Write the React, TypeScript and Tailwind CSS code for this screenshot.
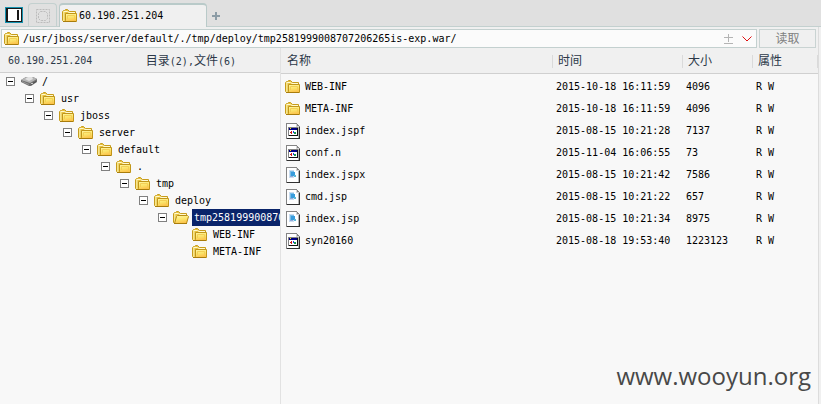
import React from "react";

const MONO = "font-['DejaVu_Sans_Mono','Noto_Sans_CJK_SC',monospace]";

function Folder({ open = false }: { open?: boolean }) {
  return (
    <svg width="16" height="14" viewBox="0 0 16 14" className="shrink-0" aria-hidden="true">
      <defs>
        <linearGradient id="folder-front" x1="0" y1="0" x2="0.3" y2="1">
          <stop offset="0" stopColor="#fff7a8" />
          <stop offset="0.55" stopColor="#fbe56c" />
          <stop offset="1" stopColor="#fcc44c" />
        </linearGradient>
        <linearGradient id="folder-back" x1="0" y1="0" x2="1" y2="0">
          <stop offset="0" stopColor="#fdf6b4" />
          <stop offset="0.25" stopColor="#e6bf3a" />
          <stop offset="1" stopColor="#f3dc70" />
        </linearGradient>
      </defs>
      <path d="M0.5 11.5V2.5L1.5 1.5H2.5L3.5 0.5H5.5L7.5 2.5H13.5V11.5L12.5 12.5H1.5Z" fill="url(#folder-back)" stroke="#c79c1c" />
      <path d="M2 2.5H5.5L7 3.5H13" fill="none" stroke="#fff9d0" />
      {open ? (
        <path d="M3.5 5.5L4.5 4.5H14.5L15.5 5.5L13.5 12.5H1.5Z" fill="url(#folder-front)" stroke="#b98e14" />
      ) : (
        <>
          <path d="M3.5 4.5H14.5V12.5H2.5L3.5 11.5Z" fill="url(#folder-front)" stroke="#c1961a" />
          <path d="M5.5 10V6.5H12.5V10" fill="none" stroke="#f3cf55" />
        </>
      )}
      <path d="M1 12.5H14" stroke="#a87c0c" />
    </svg>
  );
}

function Drive() {
  return (
    <svg width="16" height="10" viewBox="0 0 16 10" className="shrink-0" aria-hidden="true">
      <path d="M0 3L5 0H12L16 2V5L10 9H8L0 5Z" fill="#6f6f6f" />
      <path d="M0 3L5 0H12L16 2L9 6Z" fill="#b4b4b4" />
      <path d="M4 2L7 0H11L12 2L8 4Z" fill="#e2e2e2" />
      <path d="M1 4.5L8 7.5" stroke="#969696" />
      <path d="M10 7.5L15 4.5" stroke="#4c4c4c" />
      <path d="M10 6H12V7H10Z" fill="#c8c8c8" />
    </svg>
  );
}

function FileIcon({ kind }: { kind: "app" | "script" }) {
  return (
    <svg width="14" height="16" viewBox="0 0 14 16" className="mx-px shrink-0" shapeRendering="crispEdges" aria-hidden="true">
      <path d="M0 0H10L14 4V16H0Z" fill="#848484" />
      <path d="M13 4H14V16H1V15H13Z" fill="#303030" />
      <path d="M1 1H10V4H13V15H1Z" fill="#ffffff" />
      <path d="M10 1H11V3H13V4H10Z" fill="#d4d4d4" />
      <path d="M12 4H13V15H12Z" fill="#b8b8b8" />
      {kind === "app" ? (
        <>
          <path d="M2 4H12V13H2Z" fill="#848484" />
          <path d="M11 5H12V13H3V12H11Z" fill="#101010" />
          <path d="M3 7H11V12H3Z" fill="#ffffff" />
          <path d="M3 5H11V7H3Z" fill="#000084" />
          <path d="M4 5H5V6H4Z" fill="#ffe000" />
          <path d="M5 8H6V11H5V10H4V9H5Z" fill="#d01818" />
          <path d="M7 8H8V10H7Z" fill="#2040e0" />
          <path d="M8 9H10V11H8Z" fill="#189850" />
        </>
      ) : (
        <>
          <path d="M3 3H8V11H3Z" fill="#c8dcf0" />
          <path d="M4 4H8V9H4Z" fill="#78bce8" />
          <path d="M5 5H9V9H5Z" fill="#389cdc" />
          <path d="M4 9H7V10H4Z" fill="#90a8d8" />
          <path d="M8 8H10V10H8Z" fill="#58b8d8" />
        </>
      )}
    </svg>
  );
}

const tree = [
  { name: "/", indent: "pl-1" },
  { name: "usr", indent: "pl-[23px]" },
  { name: "jboss", indent: "pl-[42px]" },
  { name: "server", indent: "pl-[61px]" },
  { name: "default", indent: "pl-[80px]" },
  { name: ".", indent: "pl-[99px]" },
  { name: "tmp", indent: "pl-[118px]" },
  { name: "deploy", indent: "pl-[137px]" },
  { name: "tmp2581999008707206265is-exp.war", indent: "pl-[156px]", selected: true },
  { name: "WEB-INF", indent: "pl-[190px]", leaf: true },
  { name: "META-INF", indent: "pl-[190px]", leaf: true },
];

type Row = { name: string; time: string; size: string; kind: "folder" | "app" | "script" };

const files: Row[] = [
  { name: "WEB-INF", time: "2015-10-18 16:11:59", size: "4096", kind: "folder" },
  { name: "META-INF", time: "2015-10-18 16:11:59", size: "4096", kind: "folder" },
  { name: "index.jspf", time: "2015-08-15 10:21:28", size: "7137", kind: "app" },
  { name: "conf.n", time: "2015-11-04 16:06:55", size: "73", kind: "app" },
  { name: "index.jspx", time: "2015-08-15 10:21:42", size: "7586", kind: "script" },
  { name: "cmd.jsp", time: "2015-08-15 10:21:22", size: "657", kind: "script" },
  { name: "index.jsp", time: "2015-08-15 10:21:34", size: "8975", kind: "script" },
  { name: "syn20160", time: "2015-08-18 19:53:40", size: "1223123", kind: "app" },
];

function TabBar() {
  return (
    <div className="flex h-[27px] items-end border-b border-[#c3d0cf] bg-[#e0e0e0]">
      <button aria-label="Toggle panel" className="mb-[3px] ml-[5px] flex h-4 w-[18px] border border-[#1593b0] bg-[#181818] p-px">
        <span className="flex h-3 flex-1 justify-end border-l border-[#181818] bg-white py-px pr-0.5">
          <span className="w-0.5 bg-[#181818]" />
        </span>
      </button>
      <button aria-label="Home" className="ml-[5px] flex h-[23px] w-[29px] items-center justify-center rounded-t border border-b-0 border-[#c3d0cf] pt-0.5">
        <svg width="14" height="14" viewBox="0 0 14 14" fill="none" stroke="#bcbcbc" aria-hidden="true">
          <path d="M0.5 0.5H13.5V13.5H0.5Z" strokeDasharray="2 1" />
          <path d="M4.5 2.5H9.5L11.5 4.5V9.5L9.5 11.5H4.5L2.5 9.5V4.5Z" strokeDasharray="2 1" />
        </svg>
      </button>
      <button className="-mb-px ml-0.5 flex h-6 w-[148px] items-center gap-px rounded-t-sm border border-t-2 border-b-0 border-[#b9cac9] bg-[#f0f0f0] pl-0.5 text-black">
        <Folder />
        <span>60.190.251.204</span>
      </button>
      <button aria-label="New tab" className="mb-1.5 ml-[5px]">
        <svg width="8" height="8" viewBox="0 0 8 8" fill="none" stroke="#8c9ca6" strokeWidth="2" aria-hidden="true">
          <path d="M4 0V8M0 4H8" />
        </svg>
      </button>
    </div>
  );
}

function AddressBar() {
  return (
    <div className="flex h-[21px] gap-0.5 pt-0.5 pr-0.5 pl-px">
      <div className="flex flex-1 items-center border border-[#c3d0cf] bg-[#fbfbfb] pr-1 pl-0.5">
        <Folder />
        <input
          aria-label="Path"
          className="h-4 min-w-0 flex-1 bg-transparent pl-[3px] text-black outline-none"
          defaultValue="/usr/jboss/server/default/./tmp/deploy/tmp2581999008707206265is-exp.war/"
        />
        <button aria-label="Add or remove" className="mr-2">
          <svg width="10" height="10" viewBox="0 0 10 10" fill="none" stroke="#b4b4b4" aria-hidden="true">
            <path d="M0 3.5H9M4.5 0V8M0 9.5H9" />
          </svg>
        </button>
        <button aria-label="History">
          <svg width="10" height="6" viewBox="0 0 10 6" fill="none" stroke="#e01010" aria-hidden="true">
            <path d="M0.5 0.5L5 5L9.5 0.5" />
          </svg>
        </button>
      </div>
      <button className="flex w-[57px] items-center justify-center border border-[#c9d3d2] bg-[#f0f0f0] text-xs text-[#808080]">读取</button>
    </div>
  );
}

function Tree() {
  return (
    <section className="flex w-[281px] shrink-0 flex-col border-r border-[#e2e2e2]">
      <div className="flex h-[25px] items-center justify-between border-b border-[#d0d0d0] bg-[#f0f0f0] pt-0.5 pr-11 pl-2 text-[#2c3848]">
        <span>60.190.251.204</span>
        <span>
          <span className="text-xs">目录</span>(2),<span className="text-xs">文件</span>(6)
        </span>
      </div>
      <ul className="ml-0.5 flex-1">
        {tree.map((n) => (
          <li key={n.name} className={`flex h-[17px] items-center whitespace-nowrap ${n.indent}`}>
            {!n.leaf && (
              <button aria-label={`Collapse ${n.name}`} className="mr-1.5 flex size-[9px] shrink-0 items-center justify-center border border-[#808080] bg-white">
                <span className="h-px w-[5px] bg-black" />
              </button>
            )}
            {n.name === "/" ? <Drive /> : <Folder open={n.selected} />}
            <span className={`ml-[3px] h-[17px] min-w-0 flex-1 overflow-hidden pl-0.5 leading-[17px] ${n.selected ? "bg-[#0a246a] text-white" : ""}`}>
              {n.name}
            </span>
          </li>
        ))}
      </ul>
    </section>
  );
}

function FileTable() {
  const heads = [
    { label: "名称", width: "", pad: "pl-1.5" },
    { label: "时间", width: "w-[130px]", pad: "pl-[5px]" },
    { label: "大小", width: "w-[70px]", pad: "pl-[5px]" },
    { label: "属性", width: "w-[65px]", pad: "pl-[5px]" },
  ];
  return (
    <section className="min-w-0 flex-1">
      <table className="w-full table-fixed border-collapse text-left">
        <thead className="bg-[#f0f0f0] text-xs text-[#2c3848]">
          <tr className="h-[25px] border-b border-[#d0d0d0]">
            {heads.map((h) => (
              <th key={h.label} className={`p-0 pt-0.5 font-normal ${h.width}`}>
                <div className={`flex h-[13px] items-center border-r border-[#dadada] ${h.pad}`}>{h.label}</div>
              </th>
            ))}
          </tr>
        </thead>
        <tbody>
          <tr className="h-0.5" aria-hidden="true" />
          {files.map((f) => (
            <tr key={f.name} className="h-[22px]">
              <td className="p-0 pt-px pl-1">
                <div className="flex items-center gap-1">
                  {f.kind === "folder" ? <Folder /> : <FileIcon kind={f.kind} />}
                  <span>{f.name}</span>
                </div>
              </td>
              <td className="p-0 pt-px pl-[3px]">{f.time}</td>
              <td className="p-0 pt-px pl-[3px]">{f.size}</td>
              <td className="p-0 pt-px pl-[3px]">R W</td>
            </tr>
          ))}
        </tbody>
      </table>
    </section>
  );
}

export default function App() {
  return (
    <main className={`flex min-h-screen flex-col bg-[#f0f0f0] text-[10px] leading-4 text-black ${MONO}`}>
      <TabBar />
      <div className="mr-0.5 flex flex-1 flex-col border-r border-[#dcdcdc]">
        <AddressBar />
        <div className="relative flex flex-1 bg-[#f8f8f8]">
          <Tree />
          <FileTable />
          <p className="absolute right-[7px] bottom-3 font-['Open_Sans','Noto_Sans',sans-serif] text-2xl leading-8 text-[#484848]">www.wooyun.org</p>
        </div>
      </div>
    </main>
  );
}
